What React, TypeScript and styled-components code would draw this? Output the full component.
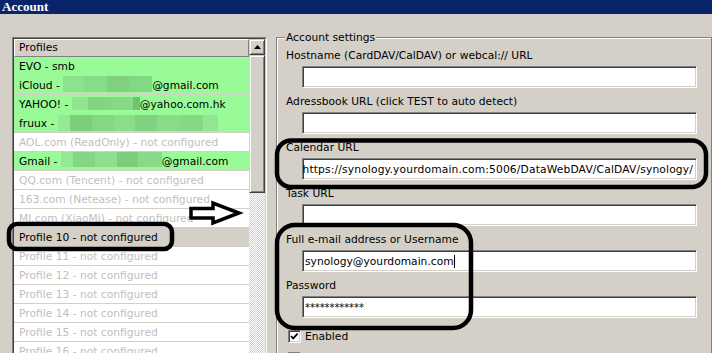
import React from "react";
import styled, { createGlobalStyle } from "styled-components";

const GlobalStyle = createGlobalStyle`
  html, body {
    margin: 0;
    padding: 0;
    background: #d4d0c8;
  }
`;

type Kind = "ok" | "off" | "sel";
type Cell = [number, string];

const Window = styled.div`
  position: relative;
  width: 712px;
  height: 353px;
  overflow: hidden;
  background: #d4d0c8;
  font-family: "DejaVu Sans", Verdana, sans-serif;
  font-size: 10.7px;
  color: #000;
`;

const TitleBar = styled.div`
  height: 14px;
  padding-left: 2px;
  background: #0a246a;
  color: #fff;
  font: bold 13px/14px "Liberation Serif", "Times New Roman", serif;
`;

const Body = styled.div`
  display: flex;
  align-items: flex-start;
  gap: 9px;
  padding: 17px 0 0 12px;
`;

/* profile list */
const ListFrame = styled.div`
  margin-top: 6px;
  border: 1px solid;
  border-color: #808080 #fff #fff #808080;
`;

const ListInner = styled.div`
  display: flex;
  height: 330px;
  border: 1px solid;
  border-color: #404040 #d4d0c8 #d4d0c8 #404040;
`;

const ListColumn = styled.div`
  width: 235px;
  background: #fff;
`;

const ListHeader = styled.div`
  height: 18px;
  box-sizing: border-box;
  padding-left: 4px;
  line-height: 16px;
  background: #d4d0c8;
  border: 1px solid;
  border-color: #fff #808080 #808080 #fff;
`;

const Row = styled.div<{ $kind: Kind }>`
  display: flex;
  align-items: center;
  height: 19px;
  box-sizing: border-box;
  padding-left: 5px;
  border-bottom: 1px solid #d4d0c8;
  white-space: pre;
  background: ${p => (p.$kind === "ok" ? "#98fb98" : p.$kind === "sel" ? "#d4d0c8" : "#fff")};
  color: ${p => (p.$kind === "off" ? "#c0c0c0" : "#000")};
`;

const Blur = styled.span<{ $top: number; $h: number }>`
  display: flex;
  align-self: flex-start;
  margin-top: ${p => p.$top}px;
  height: ${p => p.$h}px;
`;

const BlurCell = styled.span<{ $w: number; $c: string }>`
  width: ${p => p.$w}px;
  background: ${p => p.$c};
`;

const ScrollBar = styled.div`
  display: flex;
  flex-direction: column;
  width: 16px;
  background-color: #fff;
  background-image: conic-gradient(#d4d0c8 25%, #fff 0 50%, #d4d0c8 0 75%, #fff 0);
  background-size: 2px 2px;
`;

const ScrollButton = styled.div<{ $h: number }>`
  display: flex;
  align-items: center;
  justify-content: center;
  height: ${p => p.$h}px;
  box-sizing: border-box;
  background: #d4d0c8;
  border: 1px solid;
  border-color: #d4d0c8 #404040 #404040 #d4d0c8;
  box-shadow: inset 1px 1px #fff, inset -1px -1px #808080;
`;

/* account settings */
const Group = styled.fieldset`
  margin: 0;
  min-width: 0;
  width: 440px;
  padding: 6px 0 0 9px;
  border: 1px solid #808080;
  box-shadow: inset 1px 1px #fff;
`;

const Legend = styled.legend`
  padding: 0 1px;
  margin-left: -1px;
  line-height: 13px;
  background: #d4d0c8;
`;

const Field = styled.div`
  display: flex;
  flex-direction: column;
  margin-bottom: 8px;
`;

const Label = styled.div`
  height: 16px;
  line-height: 11px;
  white-space: nowrap;
`;

// $end: value scrolled to its end, as a long URL in a narrow box
const TextBox = styled.div<{ $end?: boolean }>`
  display: flex;
  align-items: center;
  justify-content: ${p => (p.$end ? "flex-end" : "flex-start")};
  letter-spacing: ${p => (p.$end ? "0.15px" : "normal")};
  margin-left: 16px;
  width: 395px;
  height: 22px;
  box-sizing: border-box;
  padding: 0 3px 0 2px;
  overflow: hidden;
  white-space: nowrap;
  background: #fff;
  border: 1px solid;
  border-color: #808080 #fff #fff #808080;
  box-shadow: inset 1px 1px #404040, inset -1px -1px #d4d0c8;
`;

const Caret = styled.span`
  width: 1px;
  height: 13px;
  background: #000;
`;

const Secret = styled.span`
  font-size: 10px;
  letter-spacing: -0.1px;
`;

const CheckRow = styled.div`
  display: flex;
  align-items: flex-start;
  gap: 4px;
  height: 22px;
  box-sizing: border-box;
  padding: 4px 0 0 2px;
  line-height: 13px;
  white-space: nowrap;
`;

const CheckBox = styled.span`
  display: flex;
  width: 13px;
  height: 13px;
  box-sizing: border-box;
  background: #fff;
  border: 1px solid;
  border-color: #808080 #fff #fff #808080;
  box-shadow: inset 1px 1px #404040, inset -1px -1px #d4d0c8;
`;

const Annotations = styled.svg`
  position: absolute;
  left: 0;
  top: 0;
  pointer-events: none;
`;

const icloud: Cell[] = [[21, "#8de28d"], [23, "#88dc88"], [22, "#7fd17f"], [23, "#84d784"]];
const yahoo: Cell[] = [[16, "#90e490"], [23, "#82d682"], [22, "#86da86"], [7, "#6fc46f"]];
const fruux: Cell[] = [
  [12, "#94ea94"], [22, "#7ccd7c"], [22, "#84d884"], [21, "#8ade8a"],
  [22, "#80d280"], [23, "#88dc88"], [23, "#85d985"], [15, "#92e692"],
];
const gmail: Cell[] = [[12, "#94ea94"], [22, "#84d684"], [22, "#8ee08e"], [21, "#7ccd7c"], [24, "#88da88"]];

const Redacted = ({ cells, top, h }: { cells: Cell[]; top: number; h: number }) => (
  <Blur $top={top} $h={h}>
    {cells.map(([w, c], i) => (
      <BlurCell key={i} $w={w} $c={c} />
    ))}
  </Blur>
);

const unset = [
  "QQ.com (Tencent) - not configured",
  "163.com (Netease) - not configured",
  "MI.com (XiaoMi) - not configured",
];

const fields = [
  { label: "Hostname (CardDAV/CalDAV) or webcal:// URL", value: "" },
  { label: "Adressbook URL (click TEST to auto detect)", value: "" },
  { label: "Calendar URL", value: "https://synology.yourdomain.com:5006/DataWebDAV/CalDAV/synology/", end: true },
  { label: "Task URL", value: "" },
];

export default function App() {
  return (
    <Window>
      <GlobalStyle />
      <TitleBar>Account</TitleBar>
      <Body>
        <ListFrame>
          <ListInner>
            <ListColumn>
              <ListHeader>Profiles</ListHeader>
              <Row $kind="ok">EVO - smb</Row>
              <Row $kind="ok">
                {"iCloud - "}
                <Redacted cells={icloud} top={0} h={16} />
                @gmail.com
              </Row>
              <Row $kind="ok">
                {"YAHOO! - "}
                <Redacted cells={yahoo} top={2} h={13} />
                @yahoo.com.hk
              </Row>
              <Row $kind="ok">
                {"fruux - "}
                <Redacted cells={fruux} top={1} h={16} />
              </Row>
              <Row $kind="off">AOL.com (ReadOnly) - not configured</Row>
              <Row $kind="ok">
                {"Gmail - "}
                <Redacted cells={gmail} top={0} h={15} />
                @gmail.com
              </Row>
              {unset.map(t => (
                <Row key={t} $kind="off">{t}</Row>
              ))}
              <Row $kind="sel">Profile 10 - not configured</Row>
              {[11, 12, 13, 14, 15, 16].map(n => (
                <Row key={n} $kind="off">Profile {n} - not configured</Row>
              ))}
            </ListColumn>
            <ScrollBar>
              <ScrollButton $h={16}>
                <svg width="7" height="4" viewBox="0 0 7 4">
                  <polygon points="0,4 7,4 3.5,0" fill="#000" />
                </svg>
              </ScrollButton>
              <ScrollButton $h={138} />
            </ScrollBar>
          </ListInner>
        </ListFrame>

        <Group>
          <Legend>Account settings</Legend>
          {fields.map(f => (
            <Field key={f.label}>
              <Label>{f.label}</Label>
              <TextBox $end={f.end}>{f.value}</TextBox>
            </Field>
          ))}
          <Field>
            <Label>Full e-mail address or Username</Label>
            <TextBox>
              synology@yourdomain.com
              <Caret />
            </TextBox>
          </Field>
          <Field>
            <Label>Password</Label>
            <TextBox>
              <Secret>************</Secret>
            </TextBox>
          </Field>
          <CheckRow>
            <CheckBox>
              <svg width="11" height="11" viewBox="0 0 11 11">
                <path d="M2 5 L4.2 7.4 L8.6 2.6" fill="none" stroke="#000" strokeWidth="1.7" />
              </svg>
            </CheckBox>
            Enabled
          </CheckRow>
          <CheckRow>
            <CheckBox />
            Read-Only (do not upload changes to the server)
          </CheckRow>
        </Group>
      </Body>

      <Annotations width="712" height="353" viewBox="0 0 712 353">
        <g fill="none" stroke="#000" strokeWidth="4.5">
          <rect x="9" y="224" width="163" height="25" rx="8" />
          <rect x="277" y="140.5" width="429" height="46.5" rx="14" />
          <rect x="277" y="225" width="194" height="103" rx="18" />
        </g>
        <polygon
          points="191,208.5 213,208.5 213,203 239,213 213,223 213,218 191,218"
          fill="#fff"
          stroke="#000"
          strokeWidth="3.5"
          strokeLinejoin="miter"
        />
      </Annotations>
    </Window>
  );
}
